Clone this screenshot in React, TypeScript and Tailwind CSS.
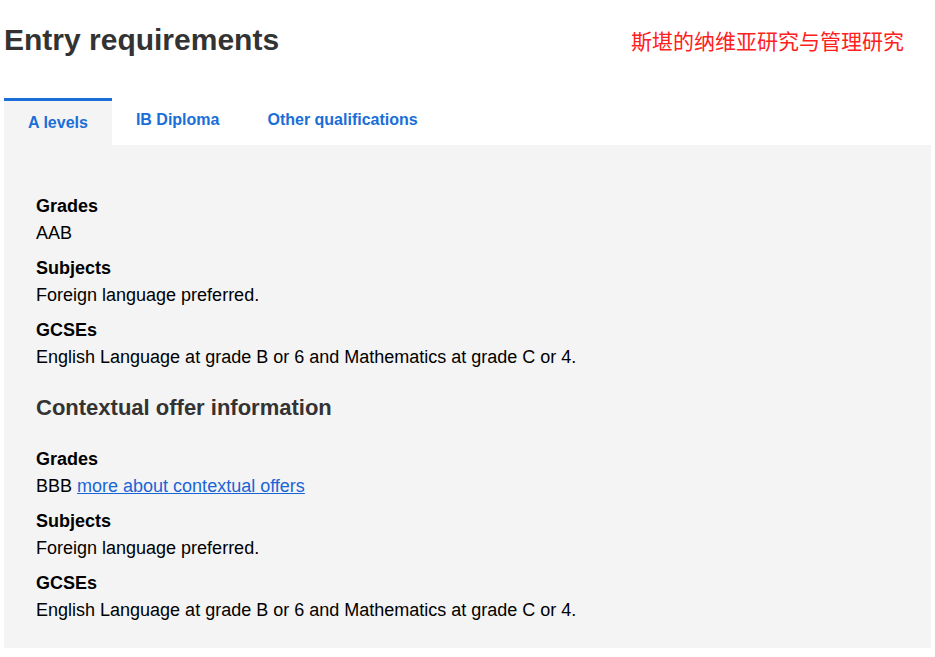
import { useState } from "react";

const tabs = ["A levels", "IB Diploma", "Other qualifications"];

function Item({ label, children }: { label: string; children: React.ReactNode }) {
  return (
    <div className="mb-[11px]">
      <div className="font-bold text-black leading-6 mb-[3px]">{label}</div>
      <div className="text-black leading-6">{children}</div>
    </div>
  );
}

export default function App() {
  const [active, setActive] = useState(0);

  return (
    <div className="bg-white min-h-screen px-1 text-[18px]" style={{ fontFamily: '"Liberation Sans", Arial, sans-serif' }}>
      {/* Header */}
      <div className="flex justify-between items-start pt-[20px]">
        <h1 className="text-[30px] font-bold text-[#333] leading-[40px]">Entry requirements</h1>
        <span
          className="text-[21px] text-[#ff2020] mr-[27px] mt-[5px] leading-[30px]"
          style={{ fontFamily: '"Noto Sans CJK SC", sans-serif' }}
        >
          斯堪的纳维亚研究与管理研究
        </span>
      </div>

      {/* Tabs */}
      <div className="flex mt-[38px]">
        {tabs.map((t, i) => (
          <button
            key={t}
            onClick={() => setActive(i)}
            className={`px-6 font-bold text-[16px] text-[#1a6ed8] h-[47px] ${
              active === i ? "bg-[#f4f4f4] border-t-[3px] border-[#1a6ed8] pt-[0px]" : "pb-[4px]"
            }`}
          >
            {t}
          </button>
        ))}
      </div>

      {/* Panel */}
      <div className="bg-[#f4f4f4] px-8 pt-[49px] pb-[15px]">
        <Item label="Grades">AAB</Item>
        <Item label="Subjects">Foreign language preferred.</Item>
        <Item label="GCSEs">English Language at grade B or 6 and Mathematics at grade C or 4.</Item>

        <h2 className="text-[22px] font-bold text-[#333] leading-[30px] mt-[24px] mb-[24px]">
          Contextual offer information
        </h2>

        <Item label="Grades">
          BBB{" "}
          <a href="#" className="text-[#1a65d6] underline">
            more about contextual offers
          </a>
        </Item>
        <Item label="Subjects">Foreign language preferred.</Item>
        <Item label="GCSEs">English Language at grade B or 6 and Mathematics at grade C or 4.</Item>
      </div>
    </div>
  );
}
